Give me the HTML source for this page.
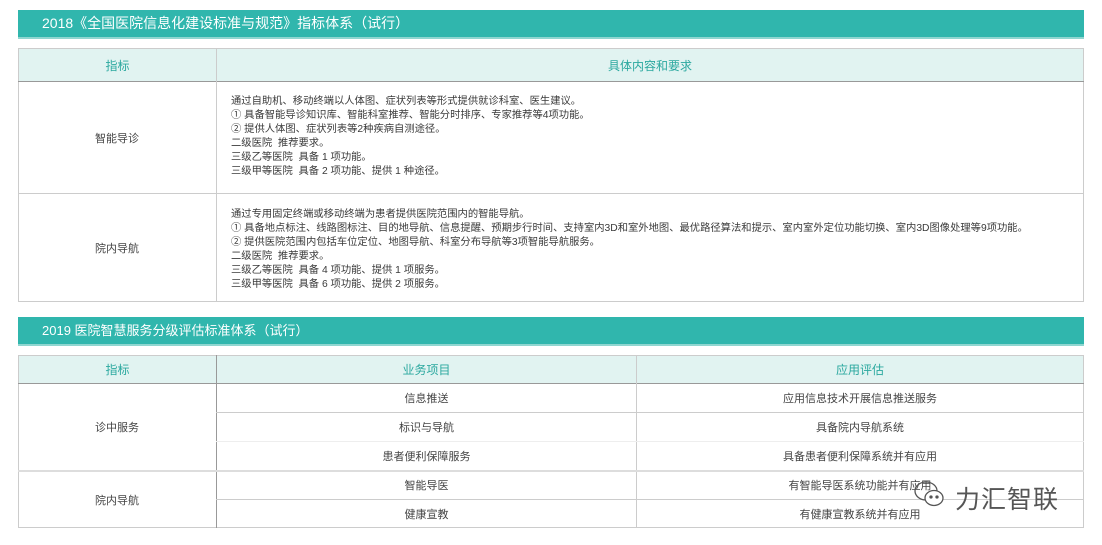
<!DOCTYPE html>
<html><head><meta charset="utf-8"><style>
*{margin:0;padding:0;box-sizing:border-box}
body{width:1102px;height:545px;background:#fff;font-family:"Liberation Sans","Noto Sans CJK SC",sans-serif;position:relative;overflow:hidden;color:#444}
.bar{position:absolute;left:18px;width:1066px;background:#30b6ad;color:#fff;font-size:14px;padding-left:24px;border-bottom:2px solid #8fd6d0}
.c{position:absolute;display:flex;align-items:center;justify-content:center;font-size:11px;color:#444}
.h{background:#e1f3f1;color:#2aa89f;font-size:12px}
.ln{position:absolute;background:#ccc}
.txt{position:absolute;left:231px;font-size:10.3px;line-height:14px;color:#3a3a3a}
</style></head><body>
<div class="bar" style="top:10px;height:29px;line-height:27px">2018《全国医院信息化建设标准与规范》指标体系（试行）</div>
<div style="position:absolute;left:18px;top:48px;width:1066px;height:254px;border:1px solid #ccc"></div>
<div class="c h" style="left:19px;top:49px;width:197px;height:32px">指标</div>
<div class="c h" style="left:217px;top:49px;width:866px;height:32px">具体内容和要求</div>
<div class="ln" style="left:18px;top:81px;width:1066px;height:1px;background:#999"></div>
<div class="ln" style="left:216px;top:48px;width:1px;height:254px"></div>
<div class="ln" style="left:18px;top:193px;width:1066px;height:1px"></div>
<div class="c" style="left:18px;top:82px;width:198px;height:111px">智能导诊</div>
<div class="c" style="left:18px;top:194px;width:198px;height:108px">院内导航</div>
<div class="txt" style="top:95px">通过自助机、移动终端以人体图、症状列表等形式提供就诊科室、医生建议。<br>① 具备智能导诊知识库、智能科室推荐、智能分时排序、专家推荐等4项功能。<br>② 提供人体图、症状列表等2种疾病自测途径。<br>二级医院&nbsp; 推荐要求。<br>三级乙等医院&nbsp; 具备 1 项功能。<br>三级甲等医院&nbsp; 具备 2 项功能、提供 1 种途径。</div>
<div class="txt" style="top:208px">通过专用固定终端或移动终端为患者提供医院范围内的智能导航。<br>① 具备地点标注、线路图标注、目的地导航、信息提醒、预期步行时间、支持室内3D和室外地图、最优路径算法和提示、室内室外定位功能切换、室内3D图像处理等9项功能。<br>② 提供医院范围内包括车位定位、地图导航、科室分布导航等3项智能导航服务。<br>二级医院&nbsp; 推荐要求。<br>三级乙等医院&nbsp; 具备 4 项功能、提供 1 项服务。<br>三级甲等医院&nbsp; 具备 6 项功能、提供 2 项服务。</div>

<div class="bar" style="top:317px;height:29px;line-height:27px;font-size:13px">2019 医院智慧服务分级评估标准体系（试行）</div>
<div style="position:absolute;left:18px;top:355px;width:1066px;height:173px;border:1px solid #ccc"></div>
<div class="c h" style="left:19px;top:356px;width:197px;height:27px">指标</div>
<div class="c h" style="left:217px;top:356px;width:419px;height:27px">业务项目</div>
<div class="c h" style="left:637px;top:356px;width:446px;height:27px">应用评估</div>
<div class="ln" style="left:18px;top:383px;width:1066px;height:1px;background:#999"></div>
<div class="ln" style="left:216px;top:355px;width:1px;height:173px;background:#999"></div>
<div class="ln" style="left:636px;top:355px;width:1px;height:173px"></div>
<div class="ln" style="left:216px;top:412px;width:868px;height:1px"></div>
<div class="ln" style="left:216px;top:441px;width:868px;height:1px;background:#eee"></div>
<div class="ln" style="left:18px;top:470px;width:1066px;height:2px;background:#ddd"></div>
<div class="ln" style="left:216px;top:499px;width:868px;height:1px"></div>
<div class="c" style="left:18px;top:384px;width:198px;height:86px">诊中服务</div>
<div class="c" style="left:18px;top:471px;width:198px;height:57px">院内导航</div>
<div class="c" style="left:217px;top:384px;width:419px;height:28px">信息推送</div>
<div class="c" style="left:217px;top:413px;width:419px;height:28px">标识与导航</div>
<div class="c" style="left:217px;top:442px;width:419px;height:28px">患者便利保障服务</div>
<div class="c" style="left:217px;top:471px;width:419px;height:28px">智能导医</div>
<div class="c" style="left:217px;top:500px;width:419px;height:28px">健康宣教</div>
<div class="c" style="left:637px;top:384px;width:446px;height:28px">应用信息技术开展信息推送服务</div>
<div class="c" style="left:637px;top:413px;width:446px;height:28px">具备院内导航系统</div>
<div class="c" style="left:637px;top:442px;width:446px;height:28px">具备患者便利保障系统并有应用</div>
<div class="c" style="left:637px;top:471px;width:446px;height:28px">有智能导医系统功能并有应用</div>
<div class="c" style="left:637px;top:500px;width:446px;height:28px">有健康宣教系统并有应用</div>
<svg style="position:absolute;left:912px;top:477px" width="36" height="36" viewBox="0 0 36 36" fill="none" stroke="#555" stroke-width="1.3"><ellipse cx="14" cy="14" rx="11" ry="9"/><ellipse cx="22" cy="21" rx="9" ry="7.5" fill="#fff"/><circle cx="19" cy="20" r="1" fill="#555"/><circle cx="25" cy="20" r="1" fill="#555"/></svg>
<div style="position:absolute;left:955px;top:480px;font-size:25px;color:#555;letter-spacing:1px">力汇智联</div>
</body></html>
